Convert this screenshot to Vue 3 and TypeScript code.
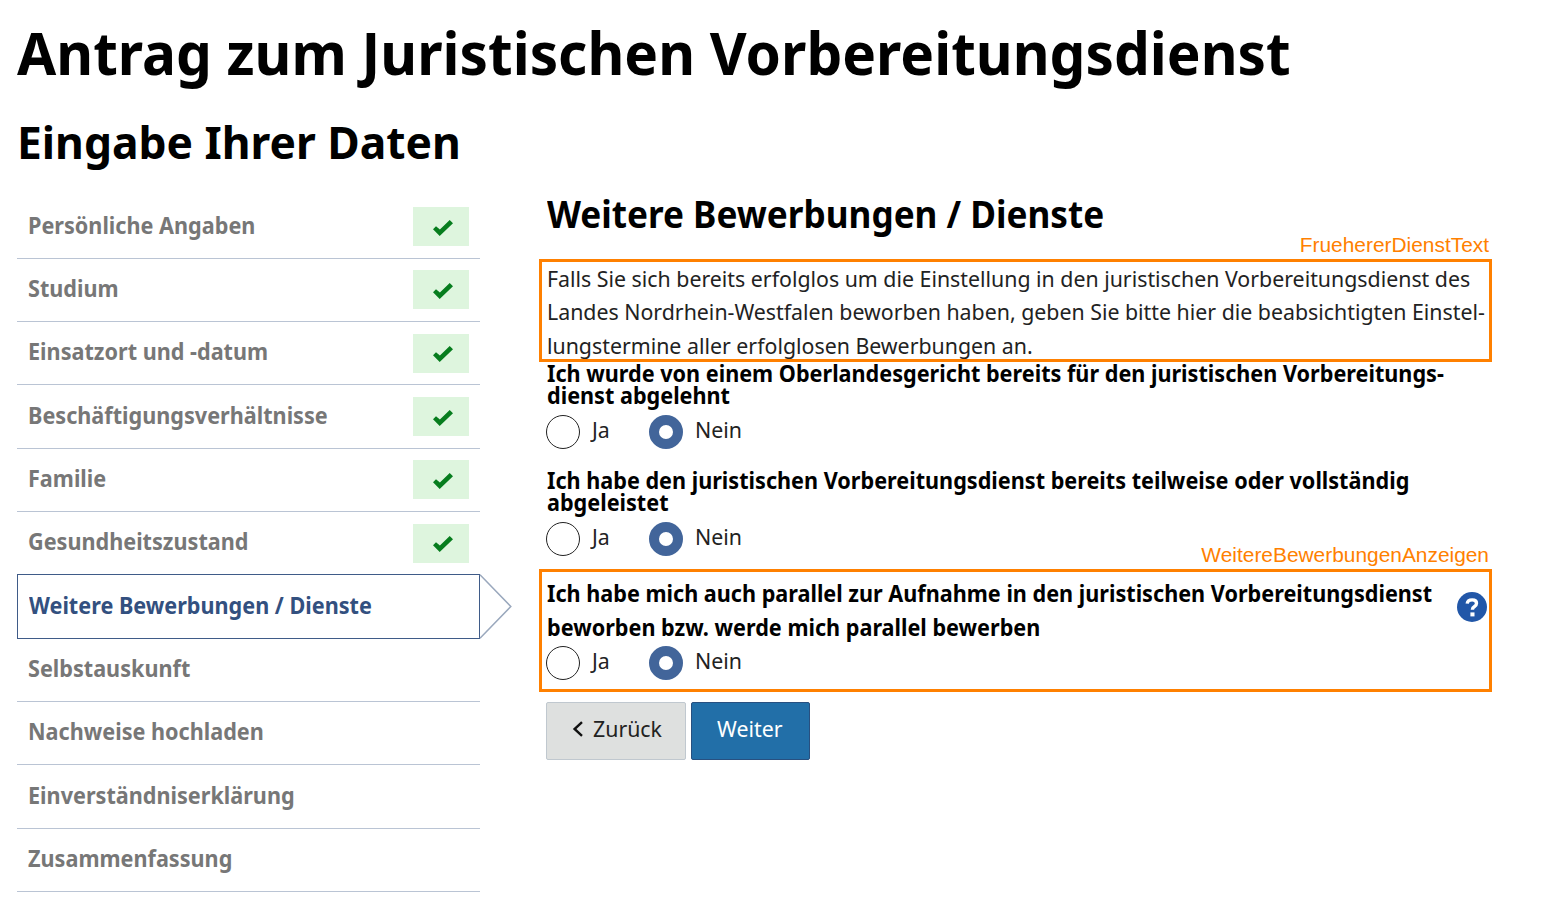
<script setup lang="ts">
interface Step {
  label: string
  done?: boolean
  active?: boolean
}

interface Question {
  id: string
  lines: string[]
  annotation?: string
  help?: boolean
}

const steps: Step[] = [
  { label: 'Persönliche Angaben', done: true },
  { label: 'Studium', done: true },
  { label: 'Einsatzort und -datum', done: true },
  { label: 'Beschäftigungsverhältnisse', done: true },
  { label: 'Familie', done: true },
  { label: 'Gesundheitszustand', done: true },
  { label: 'Weitere Bewerbungen / Dienste', active: true },
  { label: 'Selbstauskunft' },
  { label: 'Nachweise hochladen' },
  { label: 'Einverständniserklärung' },
  { label: 'Zusammenfassung' },
]

const intro: string[] = [
  'Falls Sie sich bereits erfolglos um die Einstellung in den juristischen Vorbereitungsdienst des',
  'Landes Nordrhein-Westfalen beworben haben, geben Sie bitte hier die beabsichtigten Einstel-',
  'lungstermine aller erfolglosen Bewerbungen an.',
]

const questions: Question[] = [
  {
    id: 'abgelehnt',
    lines: [
      'Ich wurde von einem Oberlandesgericht bereits für den juristischen Vorbereitungs-',
      'dienst abgelehnt',
    ],
  },
  {
    id: 'abgeleistet',
    lines: [
      'Ich habe den juristischen Vorbereitungsdienst bereits teilweise oder vollständig',
      'abgeleistet',
    ],
  },
  {
    id: 'parallel',
    lines: [
      'Ich habe mich auch parallel zur Aufnahme in den juristischen Vorbereitungsdienst',
      'beworben bzw. werde mich parallel bewerben',
    ],
    annotation: 'WeitereBewerbungenAnzeigen',
    help: true,
  },
]
</script>

<template>
  <div class="page">
    <h1><span class="fit">Antrag zum Juristischen Vorbereitungsdienst</span></h1>
    <h2><span class="fit">Eingabe Ihrer Daten</span></h2>
    <div class="columns">
      <nav class="steps">
        <div
          v-for="step in steps"
          :key="step.label"
          class="step"
          :class="{ active: step.active }"
        >
          <span class="fit">{{ step.label }}</span>
          <div v-if="step.done" class="badge">
            <svg viewBox="0 0 20 16" width="20" height="16">
              <path d="M0 9.2 3 6.2 6.9 9.6 16.7 0 20 3.3 6.7 16Z" fill="#077d1e" />
            </svg>
          </div>
          <svg v-if="step.active" class="arrow" width="34" height="65" viewBox="0 0 34 65">
            <path d="M1 .8 31.8 32.5 1 64.2" fill="#fff" stroke="#9aa8bd" stroke-width="1.5" />
          </svg>
        </div>
      </nav>

      <main class="content">
        <h3><span class="fit">Weitere Bewerbungen / Dienste</span></h3>
        <div class="intro">
          <div v-for="line in intro" :key="line"><span class="fit">{{ line }}</span></div>
          <div class="frame intro-frame"><span class="tag">FruehererDienstText</span></div>
        </div>

        <section
          v-for="q in questions"
          :key="q.id"
          class="question"
          :class="{ framed: q.annotation }"
        >
          <div class="legend">
            <div v-for="line in q.lines" :key="line"><span class="fit">{{ line }}</span></div>
          </div>
          <div class="options">
            <span class="radio"></span>
            <span class="option-label ja"><span class="fit">Ja</span></span>
            <span class="radio checked"></span>
            <span class="option-label"><span class="fit">Nein</span></span>
          </div>
          <svg v-if="q.help" class="help" width="30" height="30" viewBox="0 0 30 30">
            <circle cx="15" cy="15" r="15" fill="#2257a8" />
            <path
              d="M10.2 11.6Q10.6 7.9 15.2 7.9Q19.5 7.9 19.5 11.3Q19.5 13.3 17.5 14.5Q15.4 15.7 15.4 17.8"
              fill="none"
              stroke="#fff"
              stroke-width="3.4"
            />
            <rect x="13.4" y="20.4" width="4.1" height="4" fill="#fff" />
          </svg>
          <div v-if="q.annotation" class="frame question-frame">
            <span class="tag">{{ q.annotation }}</span>
          </div>
        </section>

        <div class="buttons">
          <button type="button" class="back">
            <svg width="11" height="16" viewBox="0 0 11 16">
              <path d="M10 1.2 2.6 8 10 14.8" fill="none" stroke="#111" stroke-width="2.4" />
            </svg>
            <span class="fit">Zurück</span>
          </button>
          <button type="button" class="next"><span class="fit">Weiter</span></button>
        </div>
      </main>
    </div>
  </div>
</template>

<style>
body {
  margin: 0;
  background: #fff;
}
</style>

<style scoped>
.page {
  box-sizing: border-box;
  width: 1541px;
  height: 919px;
  overflow: hidden;
  padding: 13px 0 0 17px;
  font: 400 22.5px/33.75px 'Noto Sans', 'Open Sans', sans-serif;
  color: #222;
}

h1,
h2,
h3 {
  margin: 0;
  font-weight: 700;
  color: #000;
  white-space: nowrap;
}

.fit {
  display: inline-block;
  transform: scaleX(0.948);
  transform-origin: 0 50%;
  white-space: nowrap;
}

h1 {
  height: 78px;
  font-size: 58.5px;
  line-height: 78px;
}

h1 .fit {
  transform: scaleX(0.97);
}

h2 {
  height: 104px;
  font-size: 45px;
  line-height: 102px;
}

h2 .fit {
  transform: scaleX(0.985);
}

h3 {
  height: 66.6px;
  font-size: 36.8px;
  line-height: 39px;
}

h3 .fit {
  transform: scaleX(0.955);
}

.columns {
  display: grid;
  grid-template-columns: 463px 945px;
  column-gap: 67px;
}

.steps {
  padding-top: 0.4px;
}

.step {
  position: relative;
  display: flex;
  box-sizing: border-box;
  height: 63.33px;
  align-items: center;
  justify-content: space-between;
  padding: 0 11px 0 10.5px;
  border-bottom: 1px solid #bac4d4;
  color: #777;
  font-weight: 700;
}

.step .fit {
  margin-top: -2px;
}

.step .fit,
.legend .fit {
  transform: scaleX(0.961);
}

.step.active {
  margin-top: -1px;
  height: 64.33px;
  border: 1px solid #3f5b88;
  color: #33507f;
}

.badge {
  display: flex;
  width: 56px;
  height: 39px;
  align-items: center;
  justify-content: center;
  background: #def5de;
}

.badge svg {
  margin: 2px 0 0 3px;
}

.arrow {
  position: absolute;
  top: -1px;
  left: 461px;
}

.intro {
  position: relative;
}

.frame {
  position: absolute;
  box-sizing: border-box;
  left: -8px;
  width: 953px;
  border: 3px solid #ff8000;
}

.intro-frame {
  top: -2.6px;
  height: 103px;
}

.tag {
  position: absolute;
  right: 0;
  top: -29px;
  font: 20.9px/24px 'Liberation Sans', Arial, sans-serif;
  color: #ff8000;
}

.question {
  position: relative;
  height: 107px;
}

.legend {
  height: 52px;
  font-weight: 700;
  line-height: 22.5px;
  color: #000;
}

.framed {
  height: 125px;
}

.framed .legend {
  height: 69px;
  line-height: 33.75px;
}

.options {
  display: flex;
  height: 34px;
  align-items: center;
}

.radio {
  box-sizing: border-box;
  width: 34px;
  height: 34px;
  flex: none;
  margin-left: -1px;
  border: 1.4px solid #222;
  border-radius: 50%;
  background: #fff;
}

.radio.checked {
  border: 10px solid #42659a;
}

.option-label {
  margin: -3px 0 0 12px;
}

.option-label.ja {
  width: 58px;
}

.question-frame {
  top: -8px;
  height: 123px;
}

.help {
  position: absolute;
  top: 15px;
  left: 910px;
}

.buttons {
  display: flex;
  gap: 5px;
  margin-left: -1px;
}

button {
  display: flex;
  box-sizing: border-box;
  height: 58px;
  align-items: center;
  padding: 0 0 4px 25px;
  border: 1px solid #c0c8cf;
  border-radius: 2px;
  font: inherit;
  color: #222;
}

.back {
  width: 140px;
  gap: 10px;
  background: #dee0df;
}

.next {
  width: 119px;
  border-color: #285080;
  background: #226fa8;
  color: #fff;
}
</style>
